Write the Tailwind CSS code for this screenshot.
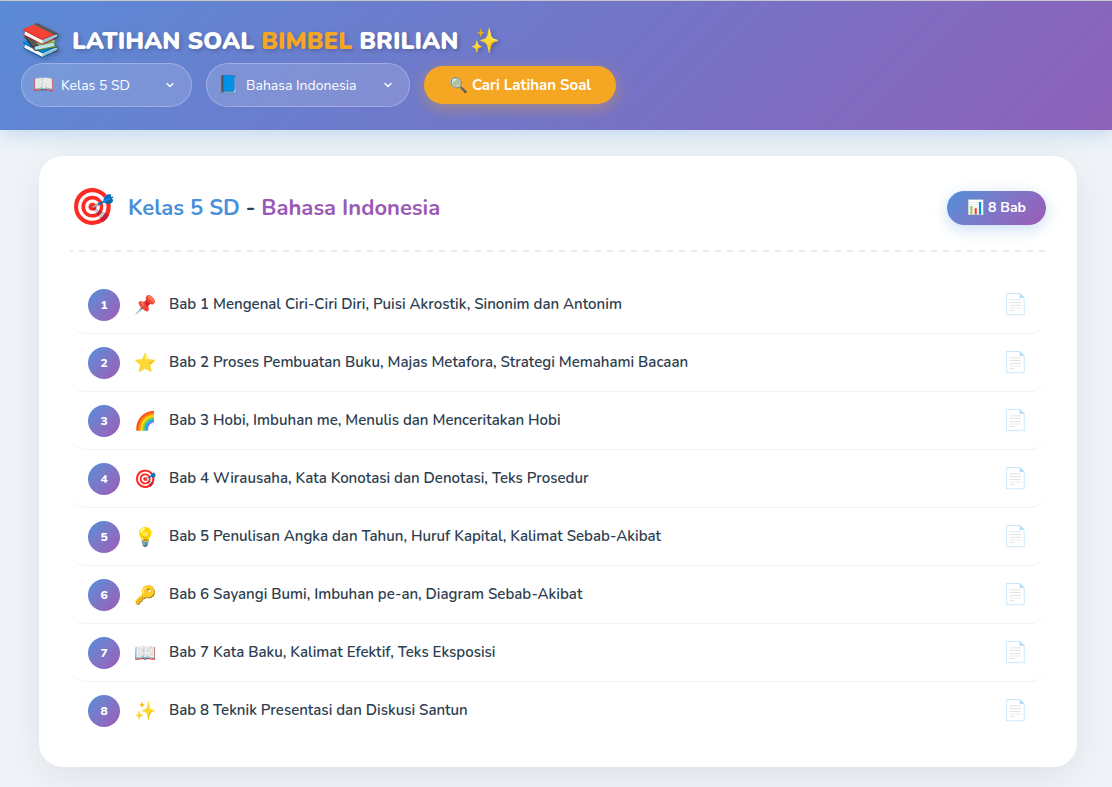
<!DOCTYPE html>
<html lang="id">

<head>
    <meta charset="UTF-8">
    <meta name="viewport" content="width=device-width, initial-scale=1.0">
    <title>Latihan Soal Bimbel Brilian</title>
    <script src="https://cdn.jsdelivr.net/npm/@tailwindcss/browser@4"></script>
</head>

<body class="min-h-screen bg-[#f0f4f8] font-['Nunito','Open_Sans',sans-serif] text-[#2c3e50]">

    <!-- Header -->
    <header class="relative border-t border-[#c8c8c8] bg-linear-135 from-[#5a8ad6] via-[#7474c7] via-55% to-[#8d61b9] pl-[21px] pr-5 pt-[18px] pb-[23px] shadow-[0_4px_20px_rgba(74,144,217,0.3)]">
        <h1 class="flex h-11 items-center text-2xl font-black text-white [text-shadow:2px_2px_4px_rgba(0,0,0,0.2)]">
            <span class="mr-[11px] text-[32px]">📚</span>
            <span>LATIHAN SOAL <span class="text-[#f5a623]">BIMBEL</span> BRILIAN</span>
            <span class="ml-[11px]">✨</span>
        </h1>

        <form class="flex flex-wrap items-center gap-[14px]" onsubmit="return false">
            <div class="relative flex h-11 w-[171px] items-center rounded-full border border-white/25 bg-white/15 text-white">
                <label for="kelas" class="absolute left-[11px] text-[17px]" aria-label="Kelas">📖</label>
                <select id="kelas" class="h-full w-full appearance-none rounded-full bg-transparent pt-px pl-[39px] text-sm outline-none">
                    <option>Kelas 5 SD</option>
                </select>
                <svg class="pointer-events-none absolute right-[15px] size-3" viewBox="0 0 12 12" fill="none" stroke="white" stroke-width="1.4" stroke-linecap="round" stroke-linejoin="round"><path d="M3 4.5 6 7.5 9 4.5" /></svg>
            </div>
            <div class="relative flex h-11 w-[204px] items-center rounded-full border border-white/25 bg-white/15 text-white">
                <label for="mapel" class="absolute left-[11px] text-[17px]" aria-label="Mata pelajaran">📘</label>
                <select id="mapel" class="h-full w-full appearance-none rounded-full bg-transparent pt-px pl-[39px] text-sm outline-none">
                    <option>Bahasa Indonesia</option>
                </select>
                <svg class="pointer-events-none absolute right-[15px] size-3" viewBox="0 0 12 12" fill="none" stroke="white" stroke-width="1.4" stroke-linecap="round" stroke-linejoin="round"><path d="M3 4.5 6 7.5 9 4.5" /></svg>
            </div>
            <button type="submit" class="h-[38px] w-48 rounded-full bg-[#f5a623] text-[15px] font-bold text-white shadow-[0_4px_15px_rgba(245,166,35,0.4)]">🔍 Cari Latihan Soal</button>
        </form>
    </header>

    <!-- Chapter list -->
    <main class="pt-[26px] pr-[35px] pb-5 pl-[39px]">
        <section class="rounded-3xl bg-white px-[31px] pt-7 pb-7 shadow-[0_10px_40px_rgba(0,0,0,0.08)]">
            <div class="flex h-[66px] items-start justify-between">
                <h2 class="flex h-12 items-center text-[22px] font-bold">
                    <span class="mr-[13px] text-4xl">🎯</span>
                    <span><span class="text-[#4a90d9]">Kelas 5 SD</span> - <span class="text-[#9b59b6]">Bahasa Indonesia</span></span>
                </h2>
                <span class="mt-[7px] flex h-[34px] items-center rounded-full bg-linear-135 from-[#4a90d9] to-[#9b59b6] px-5 text-sm font-bold text-white shadow-[0_4px_15px_rgba(74,144,217,0.3)]">📊 8 Bab</span>
            </div>
            <!-- Dashed divider -->
            <div class="h-0.5 bg-[repeating-linear-gradient(90deg,#e8ecf4_0_3px,transparent_3px_9px,#e8ecf4_9px_12px)]"></div>

            <ul id="chapterList" class="mt-6"></ul>
        </section>
    </main>

    <script>
        const chapters = [
            ["📌", "Bab 1 Mengenal Ciri-Ciri Diri, Puisi Akrostik, Sinonim dan Antonim"],
            ["⭐", "Bab 2 Proses Pembuatan Buku, Majas Metafora, Strategi Memahami Bacaan"],
            ["🌈", "Bab 3 Hobi, Imbuhan me, Menulis dan Menceritakan Hobi"],
            ["🎯", "Bab 4 Wirausaha, Kata Konotasi dan Denotasi, Teks Prosedur"],
            ["💡", "Bab 5 Penulisan Angka dan Tahun, Huruf Kapital, Kalimat Sebab-Akibat"],
            ["🔑", "Bab 6 Sayangi Bumi, Imbuhan pe-an, Diagram Sebab-Akibat"],
            ["📖", "Bab 7 Kata Baku, Kalimat Efektif, Teks Eksposisi"],
            ["✨", "Bab 8 Teknik Presentasi dan Diskusi Santun"]
        ];

        // Build one row per chapter
        document.getElementById("chapterList").innerHTML = chapters.map(([icon, title], i) => `
            <li class="border-b border-[#f0f4f8] rounded-2xl last:border-b-0">
                <a href="#bab-${i + 1}" class="flex h-[57px] items-center px-[18px]">
                    <span class="flex size-8 shrink-0 items-center justify-center rounded-full bg-linear-135 from-[#4a90d9] to-[#9b59b6] text-xs font-extrabold text-white">${i + 1}</span>
                    <span class="ml-[13px] w-6 text-center text-lg">${icon}</span>
                    <span class="ml-3 flex-1 text-[15px] font-semibold">${title}</span>
                    <span class="text-xl opacity-50">📄</span>
                </a>
            </li>`).join("");
    </script>
</body>

</html>
